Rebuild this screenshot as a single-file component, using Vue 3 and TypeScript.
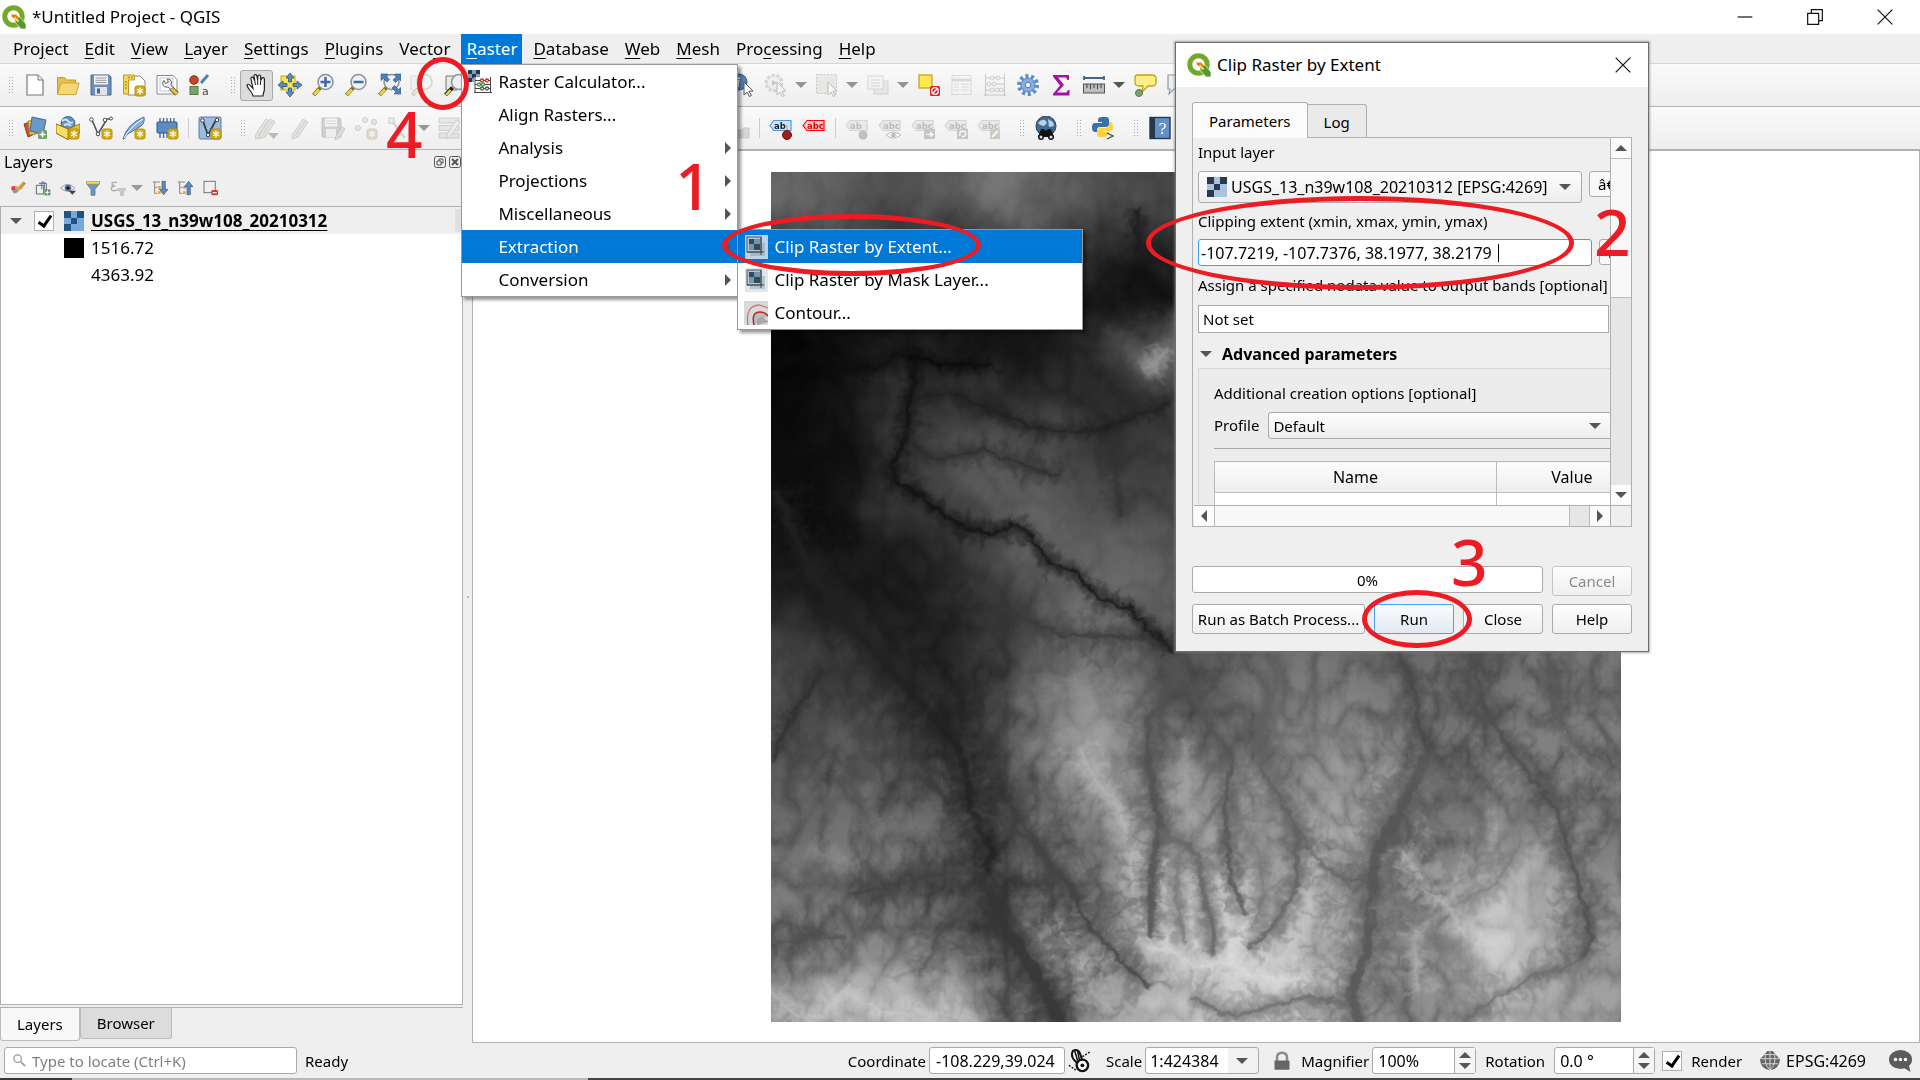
<script setup lang="ts">
import { ref } from 'vue'

interface Tool {
  kind: 'icon' | 'handle' | 'sep' | 'arrow' | 'rest'
  icon?: string
  label?: string
  off?: boolean
  active?: boolean
}

const badge = '<rect x="13" y="13" width="10" height="10" rx="2" fill="#d4aa14" stroke="#b8910c"/><path d="M18 14.500v7M15 16.200l6 3.600M21 16.200l-6 3.600" stroke="#fff" stroke-width="1.300"/>'
const lens = '<path d="M9.500 14.500l-7 7.500" stroke="#7a6a20" stroke-width="4"/><path d="M8 16.500l-5 5" stroke="#f3d23a" stroke-width="2.600"/><circle cx="14.500" cy="9" r="7.500" fill="#eef2f6" stroke="#8b9196" stroke-width="1.500"/>'
const checker = (a: string, b: string) =>
  `<rect x="2" y="2" width="20" height="20" fill="${b}"/><path d="M2 2h7v7H2zM15 2h7v7h-7zM9 9h6v6H9zM2 15h7v7H2z" fill="${a}"/>`
const cursor = '<path d="M13 9l9 9-4 .300 2.400 4.200-2 1-2.300-4.300-3.100 2.800z" fill="#fff" stroke="#555"/>'
const tag = (text: string, fill: string, edge: string, ink: string) =>
  `<path d="M1 9.500l4-5h17v10H5z" fill="${fill}" stroke="${edge}" stroke-width="1.200"/><text x="5" y="13" font-family="DejaVu Sans" font-weight="bold" font-size="8.500" fill="${ink}">${text}</text>`
const clip = '<rect x="1" y="0" width="23" height="24" fill="#b9d3e8"/><path d="M6 8h15v13H6z" fill="#8ba3b5" opacity=".5"/><rect x="3" y="2" width="14" height="15" fill="#b4c6d3" stroke="#555"/><path d="M5 4h5v5H5zM10 9h6v6h-6z" fill="#2d4a5e"/><path d="M10 4h6v5h-6zM5 9h5v6H5z" fill="#7795aa"/><path d="M17 2v18M3 17h17" stroke="#444"/>'
const pencil = '<path d="M5 18L15 3l5 3L10 21l-6 2z" fill="#d9c79a" stroke="#8c8265"/><path d="M7.500 19.500L17.500 4.500" stroke="#8c8265"/>'

const art: Record<string, string> = {
  logo: '<circle cx="11.500" cy="11.500" r="8.700" fill="none" stroke="#74a82a" stroke-width="5"/><path d="M13 12h5l6 7v5h-5l-6-7z" fill="#589632" stroke="#fff" stroke-width=".700"/><path d="M9.500 9.500h4.500l2.500 2.500v2l-2.500.500-4.500-3z" fill="#ee7913"/><path d="M12.500 12.500l4 4" stroke="#f0e64a" stroke-width="2"/>',
  new: '<path d="M4 2h11l5 5v15H4z" fill="#fff" stroke="#777" stroke-width="1.200"/><path d="M15 2v5h5" fill="#eee" stroke="#777"/>',
  open: '<path d="M1.500 21V4.500h7l2 2.500h9v3" fill="#e9bd4e" stroke="#c79a30"/><path d="M1.500 21.500L5 10h18l-3 11.500z" fill="#f7d774" stroke="#d2a53a"/>',
  save: '<path d="M2 2h18l2 2v18H2z" fill="#6d8fb8" stroke="#46678f"/><rect x="5" y="2.500" width="14" height="9" fill="#f4f4f4"/><path d="M6.500 5h11M6.500 7.300h11M6.500 9.500h11" stroke="#999"/><rect x="6" y="14" width="12" height="8" fill="#dfe4ea"/><rect x="8" y="15.500" width="3" height="5" fill="#46678f"/>',
  layout: '<path d="M6 3h12l5 5v14H6z" fill="#fff" stroke="#888"/><path d="M1.500 2h11v5h-6v14h-5z" fill="#f5d65b" stroke="#c09a20"/><path d="M3 9h2M3 12h2M3 15h2M7 3.500v2M10 3.500v2" stroke="#8c7010"/>' + badge,
  manager: '<path d="M2 2.500h16l4 4V21H2z" fill="#fff" stroke="#888"/><rect x="5" y="5" width="13" height="13" fill="none" stroke="#bcc8dd"/><path d="M16 15l6 6" stroke="#7a6420" stroke-width="5"/><path d="M16 15l6 6" stroke="#e6c14a" stroke-width="3"/><path d="M9 7.500l1.500 3 3-1.500-1.500-3q4-.500 4.500 3l-.500 3 2 2.500-2 2-3-2.500q-5 1-5.500-4z" fill="#eee" stroke="#666"/>',
  style: '<circle cx="6" cy="7" r="4.300" fill="#c2482c" stroke="#8d2f1a"/><path d="M13 10l7-8" stroke="#5480b5" stroke-width="3"/><rect x="2" y="13.500" width="8" height="8" fill="#7aa568" stroke="#547c44"/><text x="14" y="22" font-family="DejaVu Sans" font-size="11" fill="#444">a</text>',
  hand: '<path d="M8 23c0-3-5-7-6-10.500 0-1.500 2-2 3.500.500L8 15.500 6 6c-.400-2 2-2.600 2.600-.800L9.800 8 9 3.500c-.300-2.200 2.400-2.600 2.900-.500L12.600 7l.3-3.600c.2-2 2.800-1.800 2.800.200V7.500l1-2c.8-1.700 2.900-1 2.700.900V16c0 3-1.400 4-1.400 7z" fill="#fff" stroke="#222" stroke-width="1.200"/><path d="M9.800 8l.7 4M12.700 7v5M15.700 7.500L15.400 12" stroke="#222"/>',
  panSel: '<rect x="3" y="3" width="14" height="14" fill="#fae64a" stroke="#c6a81a"/><path d="M12 0l4 5h-2.500v4h-3V5H8zM12 24l4-5h-2.500v-4h-3v4H8zM0 12l5-4v2.500h4v3H5V16zM24 12l-5-4v2.500h-4v3h4V16z" fill="#5b8cc4" stroke="#2d5788" stroke-width=".800"/>',
  zoomIn: lens + '<path d="M14.500 4v10M9.500 9h10" stroke="#3f6ea6" stroke-width="2.500"/>',
  zoomOut: lens + '<path d="M9.500 9h10" stroke="#3f6ea6" stroke-width="2.500"/>',
  zoomFull: lens + '<path d="M4 1h7L9 3l3.500 3.500-2.500 2.500-3.500-3.500-2.500 2zM24 1v7l-2-2-3.500 3.500L16 7l3.500-3.500L17.500 1zM24 21h-7l2-2-4-4 2.500-2.500 4 4 2.500-2z" fill="#4d7fb9" stroke="#2d5788" stroke-width=".600"/>',
  zoomSel: '<rect x="1" y="3" width="14" height="14" fill="#efe9b0" stroke="#aaa"/>' + lens,
  zoomLayer: '<path d="M3 3h11v14H3z" fill="#e8e8e8" stroke="#777"/><path d="M9.500 14.500l-7 7.500" stroke="#222" stroke-width="4"/><path d="M7.500 17l-4.500 5" stroke="#f3d23a" stroke-width="2.400"/><circle cx="16" cy="9" r="7.500" fill="#eceef0" stroke="#8b9196" stroke-width="1.500"/>',
  identify: '<circle cx="8" cy="9" r="8" fill="#5580b4" stroke="#345c8c"/><text x="5" y="14" font-family="Liberation Serif" font-style="italic" font-weight="bold" font-size="15" fill="#fff">i</text>' + cursor,
  action: '<circle cx="10" cy="10" r="8" fill="none" stroke="#9a9a9a" stroke-width="3" stroke-dasharray="3 2"/><circle cx="10" cy="10" r="7" fill="#e4e4e4" stroke="#999"/><path d="M8 7l5 3-5 3z" fill="#777"/>' + cursor,
  select: '<rect x="1.500" y="1.500" width="20" height="19" fill="#d5d1b4" stroke="#777" stroke-dasharray="2 1.500"/>' + cursor,
  selectForm: '<rect x="8" y="8" width="14" height="13" fill="#d8d3a5" stroke="#999"/><rect x="2" y="3" width="15" height="13" fill="#f4f4f4" stroke="#999"/><path d="M5 7h9M5 10h9M5 13h9" stroke="#999"/>',
  deselect: '<rect x="2" y="2" width="13" height="13" fill="#fbe94f" stroke="#c6a81a" stroke-width="1.300"/><rect x="13" y="13" width="10" height="10" rx="1.500" fill="#d8232a"/><circle cx="18" cy="18" r="3.300" fill="none" stroke="#fff" stroke-width="1.300"/><path d="M15.800 20.200l4.400-4.400" stroke="#fff" stroke-width="1.300"/>',
  table: '<rect x="2" y="2.500" width="19" height="19" fill="#f2f6fa" stroke="#9ab"/><path d="M2 7h19" stroke="#9ab" stroke-width="3"/><path d="M4 11h5M4 14h5M4 17h5M11 11h8M11 14h8M11 17h8" stroke="#9ab"/>',
  abacus: '<path d="M2.500 1v22M21.500 1v22M1 22h22M2 5h20M2 11h20M2 17h20" stroke="#777" fill="none"/><g fill="#f3e3e3" stroke="#888"><circle cx="9" cy="5" r="2"/><circle cx="15" cy="5" r="2"/><circle cx="6" cy="11" r="2"/><circle cx="11" cy="11" r="2"/><circle cx="9" cy="17" r="2"/><circle cx="14" cy="17" r="2"/><circle cx="18" cy="17" r="2"/></g>',
  gear: '<circle cx="12" cy="12" r="9" fill="none" stroke="#5b8cc8" stroke-width="4" stroke-dasharray="3 2.650"/><circle cx="12" cy="12" r="7" fill="#86aee0" stroke="#4f80be"/><circle cx="12" cy="12" r="2.700" fill="#f5f5f5" stroke="#4f80be"/>',
  sigma: '<path d="M4 2h16v5h-1.500L17 4.500H9L15 12l-7 7.500h9.500L19 17h1.500v5.500H4V21l7-8.500L4 3.500z" fill="#a312a3"/>',
  ruler: '<path d="M2 5h20M2 3v4M22 3v4" stroke="#3f6588" stroke-width="1.800"/><rect x="1.500" y="11" width="21" height="9" fill="#bdbdbd" stroke="#555"/><path d="M5 11v4M8.500 11v5M12 11v4M15.500 11v5M19 11v4" stroke="#444"/>',
  tip: '<path d="M4 2h15q4 0 4 3.500v4q0 3.500-4 3.500h-4l-6 6 1-6H6q-4 0-4-3.500v-4Q2 2 4 2z" fill="#fdef86" stroke="#c6a01a" stroke-width="1.300"/><circle cx="6" cy="20" r="3.500" fill="#7aa568" stroke="#547c44"/>',
  note: '<path d="M2 2h18v14H8l-5 5 1-5H2z" fill="#e9f1f6" stroke="#8d9aa5" stroke-width="1.200"/>',
  dataSource: '<path d="M1 8l9-3 4 12-9 4z" fill="#c2592c" stroke="#8d3f1a"/><path d="M5 5l10-1 1 13-9 2z" fill="#f0c04a" stroke="#b88c20"/><path d="M9 1l14 3-3 14-13-3z" fill="#6b97c9" stroke="#3f6a9c"/><rect x="15" y="14" width="9" height="9" rx="1.500" fill="#6fa26a"/><path d="M19.500 15.500v6M16.500 18.500h6" stroke="#fff" stroke-width="1.600"/>',
  geopackage: '<circle cx="12" cy="7.500" r="7" fill="#5f8fc4" stroke="#3a6799"/><path d="M6 5q4-3 6 0t5 1M8 9q4-2 7 1" stroke="#d7e6f5" stroke-width="2" fill="none"/><path d="M0 8l12 5 12-5v9l-12 6.500L0 17z" fill="#e9c53c" stroke="#967710"/><path d="M12 13v10.500L0 17V8z" fill="#f7df6a" stroke="#967710"/>' + badge,
  shape: '<path d="M3 4l6 14L18 3h4" fill="none" stroke="#46515c" stroke-width="1.500"/><g fill="#fff" stroke="#46515c"><circle cx="2.500" cy="3.500" r="1.800"/><circle cx="9" cy="18" r="1.800"/><circle cx="16" cy="4" r="1.800"/><circle cx="22" cy="2.500" r="1.500"/></g>' + badge,
  feather: '<path d="M1 23Q5 8 22 1q1 6-3 9t-12 7q-3 2-5 6z" fill="#86aed8" stroke="#466d96"/><path d="M2 22Q9 10 21 3" stroke="#fff" fill="none"/>' + badge,
  memory: '<path d="M5 2v20M8.500 2v20M12 2v20M15.500 2v20M19 2v20" stroke="#3f6588" stroke-width="1.300"/><rect x="2" y="6" width="20" height="11" rx="1" fill="#5b8cc4" stroke="#2d5788"/>' + badge,
  virtual: '<rect x="1" y="1" width="22" height="22" rx="1.500" fill="#9dbbdc" stroke="#5a7ba3"/><path d="M5 5l5 14 8-15" fill="none" stroke="#34404c" stroke-width="1.800"/><g fill="#fff" stroke="#34404c"><circle cx="4.500" cy="4.500" r="1.800"/><circle cx="10" cy="19" r="1.800"/><circle cx="19" cy="4" r="1.800"/></g>' + badge,
  pencils: '<g transform="translate(-4 0)">' + pencil + '</g>' + pencil + '<path d="M13 17h11l-5.500 6z" fill="#555"/>',
  pencil,
  saveEdit: '<path d="M1 2h18l1 2v17H1z" fill="#8c8c8c" stroke="#666"/><rect x="4" y="2.500" width="12" height="8" fill="#f4f4f4"/><path d="M5 5h10M5 7.500h10" stroke="#999"/><rect x="5" y="13" width="10" height="8" fill="#e6e6e6"/><path d="M15 20l6-9 3 2-6 9-4 2z" fill="#d9b0a0" stroke="#8c7265"/>',
  points: '<g fill="#cfcfcf" stroke="#777"><circle cx="4" cy="12" r="2.500"/><circle cx="11" cy="4" r="2.500"/><circle cx="20" cy="6" r="2.500"/></g>' + badge,
  node: '<path d="M4 4l14 18M4 22L18 4" stroke="#888" stroke-width="2"/><rect x="2" y="2" width="5" height="5" fill="#ddd" stroke="#777"/>',
  multi: '<path d="M1 2h20v5H1zM1 9.500h20v5H1zM1 17h20v5H1z" fill="#cfcba5" stroke="#888"/><path d="M9 18l9-14 4 2-9 14-4 3z" fill="#ddd" stroke="#888"/>',
  diagram: '<path d="M4 22V2h5v20zM11 22v-8h5v8z" fill="#a88" stroke="#777"/><path d="M17 22V12h6v10z" fill="#9a9" stroke="#777"/>',
  label: tag('ab', '#cfe4fb', '#4d97e8', '#222') + '<path d="M18 17V9" stroke="#fff" stroke-width="2.500"/><path d="M18 17V9" stroke="#777"/><circle cx="18" cy="19" r="4.500" fill="#a51d1d" stroke="#701010"/>',
  abc: tag('abc', '#ffc9c9', '#f00', '#e00'),
  label2: tag('ab', '#d8d4b8', '#999', '#555') + '<circle cx="18" cy="19" r="4.500" fill="#a05050"/>',
  labelEye: tag('abc', '#d8d4b8', '#999', '#555') + '<path d="M8 19q7-6 15 0-8 6-15 0z" fill="#fff" stroke="#555"/><circle cx="15.500" cy="19" r="2.300" fill="#555"/>',
  labelMove: tag('abc', '#d8d4b8', '#999', '#555') + '<rect x="13" y="13" width="11" height="10" fill="#777"/><path d="M15 18h4v-3l4 3.500-4 3V19h-4z" fill="#fff"/>',
  labelRot: tag('abc', '#d8d4b8', '#999', '#555') + '<rect x="13" y="13" width="11" height="10" fill="#777"/><path d="M16 20q-1-5 3-5t2 5l-3 1" fill="none" stroke="#fff" stroke-width="1.500"/>',
  labelEdit: tag('abc', '#d8d4b8', '#999', '#555') + '<rect x="13" y="13" width="10" height="10" fill="#8c8840"/><path d="M15 21l6-6" stroke="#fff" stroke-width="2"/>',
  metasearch: '<circle cx="12" cy="10" r="10" fill="#44698f" stroke="#2c4560"/><path d="M4 7q3-4 7-3l2 3-3 3-4-1zM14 3l5 3 1 4-5 1z" fill="#b9d0e6"/><path d="M4 21l3-8h3l2 2 2-2h3l3 8z" fill="#111"/><circle cx="7" cy="21" r="3" fill="#111"/><circle cx="17" cy="21" r="3" fill="#111"/><circle cx="7" cy="21" r="1.500" fill="#ddd"/><circle cx="17" cy="21" r="1.500" fill="#ddd"/>',
  python: '<path d="M11 1h4q3 0 3 3v4q0 3-3 3H9q-3 0-3 3v2H4q-3 0-3-4.500T4 7h7V6H7V4q0-3 4-3z" fill="#3873a8"/><path d="M13 21H9q-3 0-3-3v-3q0-3 3-3h6q3 0 3-3V6h1q3 0 3 4.500T19 15h-7v1h5v2q0 3-4 3z" fill="#fdd142"/><path d="M16 17l6 3-6 3" fill="none" stroke="#444" stroke-width="1.300"/>',
  help: '<rect x="2" y="1.500" width="20" height="21" fill="#6290c8" stroke="#26384c" stroke-width="1.400"/><rect x="2" y="1.500" width="5" height="21" fill="#26384c"/><text x="10.500" y="18" font-family="DejaVu Serif" font-size="15" fill="#fff">?</text>',
  calc: '<rect x="0" y="0" width="12" height="12" fill="#7e9fb8"/><path d="M0 0h4v4H0zM8 0h4v4H8zM4 4h4v4H4zM0 8h4v4H0z" fill="#1f3a52"/><rect x="6" y="7" width="17" height="16" fill="#fff"/><path d="M7 7v16M22.500 7v16M6 22.500h18M7 10.500h16M7 14.500h16M7 18.500h16" stroke="#444"/><g fill="#fff" stroke-width="1.300"><g stroke="#d22"><circle cx="14" cy="10.500" r="1.500"/><circle cx="19" cy="10.500" r="1.500"/></g><g stroke="#393"><circle cx="11" cy="14.500" r="1.500"/><circle cx="15" cy="14.500" r="1.500"/></g><g stroke="#555"><circle cx="14" cy="18.500" r="1.500"/><circle cx="19" cy="18.500" r="1.500"/></g></g>',
  clip,
  mask: clip.replace('#b9d3e8', '#dfe7ee'),
  contour: '<rect width="24" height="24" fill="#d9d9d9"/><path d="M4 24Q1 5 15 4l9 3" fill="none" stroke="#c77" stroke-width="1.300"/><path d="M10 24Q7 11 16 11q5 0 8 4" fill="#bbb" stroke="#b22" stroke-width="1.500"/><path d="M14 24q-1-8 4-7l6 4" fill="#aaa" stroke="#999"/>',
  rasterBlue: checker('#23527c', '#74a9dc'),
  raster: checker('#283a50', '#a9c3e0'),
  brush: '<path d="M13 11l7-8 3 2-7 9z" fill="#d99a3a" stroke="#a06a1a"/><path d="M2 12q5-5 10-2l3 4q-3 7-10 6z" fill="#e3a33c"/><path d="M2 10l5-1 1 5-5 2z" fill="#d33"/><path d="M7 14l5 1-3 5-5-2z" fill="#57a5d8"/>',
  group: '<path d="M2 8h11v13H2zM6 5h11v13" fill="none" stroke="#666" stroke-width="1.500"/><path d="M10 14V3h4v12" fill="none" stroke="#5580a4" stroke-width="1.500"/><rect x="14" y="14" width="9" height="9" fill="#5f9d5a"/><path d="M18.500 15.500v6M15.500 18.500h6" stroke="#fff" stroke-width="1.500"/>',
  eye: '<path d="M1 12q10-11 21 0-10 10-21 0z" fill="#f2f2f2" stroke="#777"/><circle cx="12" cy="12" r="5" fill="#5078a0"/><circle cx="12" cy="12" r="2.400" fill="#111"/><path d="M13 16h11l-5.500 6z" fill="#444"/>',
  filter: '<path d="M2 5h20l-7 9v9h-6v-9z" fill="#6f97bd" stroke="#49708f"/><rect x="2" y="2" width="20" height="4" fill="#f2df52" stroke="#b39d20"/>',
  expr: '<path d="M10 4Q3 2 3 6q0 3 5 3-6 0-6 4 0 5 9 2" fill="none" stroke="#aaa" stroke-width="2"/><path d="M12 13h11v2l-3 3v5h-4v-5l-4-3z" fill="#ccc" stroke="#aaa"/>',
  expand: '<path d="M1 3h11M4 3v17h4M4 11h4" stroke="#888" fill="none" stroke-width="1.500"/><path d="M9 9h4v4H9zM9 17h4v4H9z" fill="#f4a32c"/><path d="M15 2h5v12h4l-6.500 8L11 14h4z" fill="#5d8cbc" stroke="#2d5788"/>',
  collapse: '<path d="M1 3h11M4 3v17h4M4 11h4" stroke="#888" fill="none" stroke-width="1.500"/><path d="M9 9h4v4H9zM9 17h4v4H9z" fill="#f4a32c"/><path d="M15 22h5V10h4l-6.500-8L11 10h4z" fill="#5d8cbc" stroke="#2d5788"/>',
  remove: '<rect x="3" y="2" width="17" height="17" fill="none" stroke="#777" stroke-width="1.500"/><rect x="14" y="15" width="10" height="8" rx="2" fill="#d8353a"/><path d="M16 19h6" stroke="#fff" stroke-width="2"/>',
  track: '<path d="M5 2q6-3 8 4l2 6-6 2Q2 8 5 2z" fill="#fff" stroke="#111" stroke-width="2.200"/><path d="M7 2l3 10M10 2l2 10" stroke="#111" stroke-width="1.600"/><circle cx="15" cy="17" r="6" fill="#fff" stroke="#111" stroke-width="2.400"/><circle cx="15" cy="17" r="2" fill="#111"/><path d="M15 8l8-5M1 17l7 5" stroke="#111" stroke-width="1.500" stroke-dasharray="2 1.500"/>',
  lock: '<path d="M6 12V8q0-6 6-6t6 6v4" fill="none" stroke="#8b8b8b" stroke-width="3"/><rect x="3" y="11.500" width="18" height="11" rx="1" fill="#666"/>',
  globe: '<path d="M6 5l3-4h6l3 4 5 5q-1 11-11 12Q2 21 1 10z" fill="#666"/><path d="M1 9.500h22M3 15h18M12 1v21M7 5q-2 10 5 17M17 5q2 10-5 17M6 5h12" stroke="#ddd" fill="none"/>',
  bubble: '<ellipse cx="12" cy="10.500" rx="11.500" ry="9.500" fill="#5c5c5c"/><path d="M14 18l8 5-2-8z" fill="#5c5c5c"/><g fill="#fff"><circle cx="7" cy="10.500" r="1.700"/><circle cx="12" cy="10.500" r="1.700"/><circle cx="17" cy="10.500" r="1.700"/></g>',
  search: '<circle cx="9" cy="9" r="6" fill="none" stroke="#999" stroke-width="2"/><path d="M14 14l7 7" stroke="#999" stroke-width="2.500"/>',
  close: '<path d="M4 4l16 16M20 4L4 20" stroke="#111" stroke-width="1.300"/>',
  min: '<path d="M4 12h16" stroke="#111" stroke-width="1.300"/>',
  restore: '<path d="M4 8h12v12H4zM8 8V4h12v12h-4" fill="none" stroke="#111" stroke-width="1.300"/>',
}

const i = (icon: string, label: string, extra: Partial<Tool> = {}): Tool => ({ kind: 'icon', icon, label, ...extra })
const off = { off: true }
const handle: Tool = { kind: 'handle' }
const sep: Tool = { kind: 'sep' }
const arrow: Tool = { kind: 'arrow' }
const arrowOff: Tool = { kind: 'arrow', off: true }
const rest: Tool = { kind: 'rest' }

const toolbars: Tool[][] = [
  [
    handle, i('new', 'New project'), i('open', 'Open project'), i('save', 'Save project'), i('layout', 'New print layout'),
    i('manager', 'Layout manager'), i('style', 'Style manager'), handle, i('hand', 'Pan map', { active: true }),
    i('panSel', 'Pan to selection'), i('zoomIn', 'Zoom in'), i('zoomOut', 'Zoom out'), i('zoomFull', 'Zoom full'),
    i('zoomSel', 'Zoom to selection', off), i('zoomLayer', 'Zoom to layer'), rest, i('identify', 'Identify'),
    i('action', 'Run action', off), arrowOff, i('select', 'Select features', off), arrowOff,
    i('selectForm', 'Select by value', off), arrowOff, i('deselect', 'Deselect'), i('table', 'Attribute table', off),
    i('abacus', 'Field calculator', off), i('gear', 'Processing toolbox'), i('sigma', 'Statistics'),
    i('ruler', 'Measure'), arrow, i('tip', 'Map tips'), i('note', 'Annotation'),
  ],
  [
    handle, i('dataSource', 'Data source manager'), i('geopackage', 'New GeoPackage'), i('shape', 'New shapefile'),
    i('feather', 'New SpatiaLite'), i('memory', 'New scratch layer'), sep, i('virtual', 'New virtual layer'), handle,
    i('pencils', 'Current edits', off), i('pencil', 'Toggle editing', off), i('saveEdit', 'Save edits', off),
    i('points', 'Add point', off), i('node', 'Vertex tool', off), arrowOff, i('multi', 'Modify attributes', off), rest,
    i('diagram', 'Diagram', off), sep, i('label', 'Label toolbar'), i('abc', 'Unplaced labels'), sep,
    i('label2', 'Pin labels', off), i('labelEye', 'Show labels', off), i('labelMove', 'Move label', off),
    i('labelRot', 'Rotate label', off), i('labelEdit', 'Change label', off), handle, i('metasearch', 'MetaSearch'),
    handle, i('python', 'Python console'), handle, i('help', 'Help contents'),
  ],
]

const menus = [
  ['Pro', 'j', 'ect'], ['', 'E', 'dit'], ['', 'V', 'iew'], ['', 'L', 'ayer'], ['', 'S', 'ettings'], ['', 'P', 'lugins'],
  ['Vect', 'o', 'r'], ['', 'R', 'aster'], ['', 'D', 'atabase'], ['', 'W', 'eb'], ['', 'M', 'esh'], ['Pro', 'c', 'essing'], ['', 'H', 'elp'],
]
const rasterMenu = [
  { label: 'Raster Calculator...', icon: 'calc' }, { label: 'Align Rasters...' }, { label: 'Analysis', sub: true },
  { label: 'Projections', sub: true }, { label: 'Miscellaneous', sub: true }, { label: 'Extraction', sub: true, open: true },
  { label: 'Conversion', sub: true },
] as { label: string; icon?: string; sub?: boolean; open?: boolean }[]
const extractionMenu = [
  { label: 'Clip Raster by Extent...', icon: 'clip', active: true },
  { label: 'Clip Raster by Mask Layer...', icon: 'mask', active: false },
  { label: 'Contour...', icon: 'contour', active: false },
]
const dockTools = ['brush', 'group', 'eye', 'filter', 'expr', '', 'expand', 'collapse', 'remove']

const extent = ref('-107.7219, -107.7376, 38.1977, 38.2179')
const nodata = ref('Not set')
const coordinate = ref('-108.229,39.024')
const magnifier = ref('100%')
const rotation = ref('0.0 °')
const rendering = ref(true)
const visible = ref(true)

/* Coarse elevation samples, 17 by 17, smoothed by the blur filter. */
const samples = [
  [100, 85, 70, 85, 115, 95, 80, 70, 60, 60, 60, 60, 60, 60, 60, 60, 60],
  [60, 65, 50, 45, 60, 60, 45, 36, 40, 50, 50, 50, 50, 50, 50, 50, 50],
  [8, 10, 12, 15, 26, 32, 16, 8, 20, 50, 50, 50, 50, 50, 50, 50, 50],
  [4, 16, 24, 22, 16, 20, 42, 96, 110, 50, 50, 50, 50, 50, 50, 50, 50],
  [8, 18, 46, 50, 44, 38, 34, 44, 60, 50, 50, 50, 50, 50, 50, 50, 50],
  [12, 14, 46, 72, 78, 70, 52, 50, 60, 60, 60, 60, 60, 60, 60, 60, 60],
  [12, 16, 48, 70, 88, 92, 72, 60, 60, 60, 60, 60, 60, 60, 60, 60, 60],
  [14, 16, 26, 42, 66, 96, 92, 88, 80, 60, 60, 60, 60, 60, 60, 60, 60],
  [34, 26, 22, 30, 56, 84, 106, 98, 80, 70, 70, 70, 70, 70, 70, 70, 70],
  [58, 46, 32, 26, 50, 84, 104, 84, 70, 92, 95, 92, 90, 85, 90, 95, 92],
  [72, 58, 44, 30, 50, 106, 134, 92, 62, 98, 112, 108, 92, 92, 88, 100, 98],
  [72, 78, 68, 40, 60, 116, 156, 98, 100, 84, 116, 124, 108, 82, 96, 104, 96],
  [84, 88, 88, 68, 50, 90, 142, 126, 128, 130, 122, 138, 128, 88, 112, 96, 100],
  [92, 100, 102, 88, 54, 84, 110, 146, 140, 142, 130, 158, 100, 96, 144, 132, 100],
  [102, 96, 72, 60, 54, 70, 100, 136, 156, 158, 152, 140, 118, 110, 178, 166, 118],
  [90, 102, 108, 98, 56, 110, 126, 148, 164, 186, 166, 158, 128, 124, 206, 164, 128],
  [138, 164, 172, 156, 92, 80, 136, 170, 178, 192, 184, 160, 104, 124, 176, 154, 138],
]
const cells = samples.flatMap((row, r) =>
  row.map((v, c) => {
    const edgeX = c === 0 ? 120 : 0
    const edgeY = r === 0 ? 120 : 0
    return { x: 20 + c * 90 - edgeX, y: 22 + r * 90 - edgeY, w: 92 + edgeX + (c === 16 ? 120 : 0), h: 92 + edgeY + (r === 16 ? 120 : 0), fill: `rgb(${v},${v},${v})` }
  }),
)

type Line = { p: number[]; w: number; c: number; len: number; o?: number }
const valleys: Line[] = [
  { p: [20, 368, 110, 350, 140, 378, 210, 375, 245, 350, 275, 352, 280, 400, 265, 440, 268, 470, 255, 520, 240, 545, 240, 580, 290, 605, 330, 640, 365, 660, 420, 675, 455, 655, 490, 680, 520, 725, 570, 745, 610, 790, 660, 805, 700, 845, 745, 885], w: 6, c: 14, len: 22 },
  { p: [280, 430, 340, 420, 400, 445, 450, 465, 505, 487, 620, 487, 650, 470, 740, 440], w: 5, c: 30, len: 16 },
  { p: [265, 490, 300, 535, 330, 540, 400, 520, 440, 540, 540, 570], w: 5, c: 42, len: 22 },
  { p: [275, 352, 330, 370, 420, 372], w: 4, c: 6, len: 12 },
  { p: [640, 490, 640, 560, 650, 640], w: 6, c: 50, len: 24 },
  { p: [30, 600, 90, 740, 200, 880, 300, 990, 360, 1060, 385, 1180, 420, 1250, 400, 1300], w: 14, c: 34, len: 50 },
  { p: [400, 1290, 400, 1340, 460, 1410, 510, 1490, 545, 1560], w: 22, c: 54, len: 90 },
  { p: [400, 1280, 300, 1290, 165, 1325], w: 7, c: 66, len: 50 },
  { p: [380, 760, 440, 810, 540, 855, 700, 862, 740, 890], w: 7, c: 58, len: 40 },
  { p: [385, 1170, 480, 1220, 560, 1310, 590, 1380, 650, 1440, 700, 1490], w: 8, c: 66, len: 70 },
  { p: [740, 890, 740, 960, 700, 1010, 700, 1090, 720, 1200, 705, 1290, 705, 1400], w: 12, c: 80, len: 40 },
  { p: [720, 1210, 790, 1250, 800, 1330, 820, 1400, 815, 1430], w: 10, c: 100, len: 26 },
  { p: [745, 900, 800, 1000, 850, 1080, 838, 1180, 850, 1300, 875, 1360], w: 9, c: 84, len: 34 },
  { p: [925, 890, 930, 940, 900, 1020, 905, 1100, 965, 1200, 970, 1300, 930, 1380, 880, 1420], w: 8, c: 96, len: 34 },
  { p: [755, 1260, 750, 1330, 765, 1410], w: 7, c: 120, len: 18 },
  { p: [850, 1180, 900, 1250, 910, 1330, 890, 1380], w: 6, c: 120, len: 22 },
  { p: [965, 1200, 1010, 1270, 1050, 1295, 1100, 1300], w: 5, c: 96, len: 36 },
  { p: [1150, 890, 1180, 950, 1185, 1010, 1205, 1070], w: 6, c: 70, len: 24 },
  { p: [1205, 1070, 1150, 1180, 1110, 1250, 1100, 1350, 1095, 1430, 1065, 1500, 1080, 1560], w: 18, c: 84, len: 84 },
  { p: [1280, 890, 1310, 1000, 1380, 1100, 1440, 1180, 1480, 1330, 1500, 1400, 1480, 1440], w: 8, c: 76, len: 44 },
  { p: [1065, 1520, 980, 1510, 900, 1530, 850, 1545, 780, 1510], w: 8, c: 104, len: 40 },
  { p: [110, 920, 60, 1000, 20, 1080], w: 5, c: 44, len: 14 },
  { p: [215, 1180, 240, 1130, 310, 980], w: 2, c: 56, len: 6 },
  { p: [120, 1120, 140, 1060], w: 2, c: 56, len: 6 },
  { p: [20, 1415, 90, 1398, 150, 1400], w: 5, c: 76, len: 34 },
  { p: [400, 1320, 330, 1380, 290, 1470], w: 5, c: 80, len: 40 },
  { p: [1480, 1440, 1380, 1480, 1310, 1520, 1270, 1554], w: 6, c: 104, len: 44 },
  { p: [1200, 1090, 1240, 1150, 1300, 1180, 1290, 1260], w: 4, c: 104, len: 34 },
  { p: [1380, 1130, 1370, 1230, 1330, 1300, 1260, 1340], w: 5, c: 120, len: 30 },
  { p: [1100, 1350, 1180, 1345, 1240, 1410, 1270, 1450], w: 4, c: 130, len: 26 },
  { p: [1420, 890, 1430, 1000, 1480, 1060, 1552, 1100], w: 4, c: 84, len: 26 },
  { p: [680, 90, 680, 160, 740, 190], w: 5, c: 26, len: 24 },
]
const ridges: Line[] = [
  { p: [575, 1060, 600, 1110, 650, 1170, 668, 1250, 672, 1340, 690, 1400, 725, 1435], w: 5, c: 205, len: 34, o: 0.4 },
  { p: [765, 1050, 770, 1120, 772, 1190], w: 6, c: 175, len: 16, o: 0.35 },
  { p: [735, 1260, 728, 1340, 732, 1420], w: 3, c: 220, len: 20, o: 0.5 },
  { p: [778, 1280, 775, 1350, 785, 1430], w: 3, c: 220, len: 18, o: 0.5 },
  { p: [825, 1280, 840, 1370, 848, 1440], w: 4, c: 228, len: 24, o: 0.5 },
  { p: [880, 1300, 875, 1390, 850, 1440], w: 4, c: 225, len: 22, o: 0.45 },
  { p: [1000, 1240, 990, 1320, 985, 1380, 940, 1440, 850, 1450], w: 4, c: 210, len: 34, o: 0.4 },
  { p: [700, 1420, 740, 1425, 780, 1455, 840, 1445, 900, 1475, 1000, 1480], w: 4, c: 232, len: 44, o: 0.45 },
  { p: [20, 1500, 60, 1540, 110, 1545, 150, 1500, 220, 1535, 330, 1540, 400, 1554], w: 5, c: 218, len: 36, o: 0.4 },
  { p: [530, 1360, 570, 1430, 600, 1500, 640, 1540], w: 4, c: 190, len: 56, o: 0.35 },
  { p: [90, 1240, 130, 1260, 180, 1270], w: 6, c: 150, len: 24, o: 0.3 },
  { p: [690, 378, 715, 365, 735, 340], w: 8, c: 185, len: 30, o: 0.45 },
  { p: [1160, 1240, 1200, 1320, 1240, 1345, 1270, 1400], w: 6, c: 215, len: 50, o: 0.3 },
  { p: [1180, 1380, 1185, 1500], w: 5, c: 200, len: 26, o: 0.3 },
  { p: [1230, 1340, 1300, 1290, 1350, 1300], w: 5, c: 195, len: 50, o: 0.3 },
  { p: [1460, 1060, 1500, 1100, 1552, 1140], w: 6, c: 150, len: 40, o: 0.3 },
  { p: [570, 930, 590, 1000, 575, 1060], w: 6, c: 150, len: 60, o: 0.25 },
]

let seed = 7
const rnd = () => {
  seed = (seed * 16807) % 2147483647
  return seed / 2147483647
}
const trunk = (p: number[]) => {
  let d = `M${p[0]} ${p[1]}`
  for (let k = 2; k < p.length; k += 2) d += `L${p[k]} ${p[k + 1]}`
  return d
}
/* Side branches grow off a line at a slant, each carrying a few twigs. */
const branches = (line: Line) => {
  let d = ''
  const { p, len } = line
  for (let k = 0; k + 3 < p.length; k += 2) {
    const dx = p[k + 2] - p[k]
    const dy = p[k + 3] - p[k + 1]
    const dist = Math.hypot(dx, dy)
    const heading = Math.atan2(dy, dx)
    for (let s = 0; s < dist; s += 9) {
      for (const side of [-1, 1]) {
        let x = p[k] + (dx * s) / dist
        let y = p[k + 1] + (dy * s) / dist
        let a = heading + side * (1.2 + rnd() * 0.7)
        const reach = (len + line.w / 2) * (0.3 + rnd() * rnd() * 1.2)
        d += `M${x.toFixed(0)} ${y.toFixed(0)}`
        for (let n = 0; n < 4; n++) {
          a += (rnd() - 0.5) * 0.6
          x += (Math.cos(a) * reach) / 4
          y += (Math.sin(a) * reach) / 4
          d += `L${x.toFixed(0)} ${y.toFixed(0)}`
          if (n > 0) {
            const t = a + (rnd() > 0.5 ? 0.8 : -0.8)
            d += `l${(Math.cos(t) * reach * 0.25).toFixed(0)} ${(Math.sin(t) * reach * 0.25).toFixed(0)}M${x.toFixed(0)} ${y.toFixed(0)}`
          }
        }
      }
    }
  }
  return d
}
const draw = (l: Line) => ({ ...l, d: trunk(l.p), b: branches(l), stroke: `rgb(${l.c},${l.c},${l.c})` })
const valleyPaths = valleys.map(draw)
const ridgePaths = ridges.map(draw)
</script>

<template>
  <div class="app">
    <header class="titlebar">
      <svg class="logo" viewBox="0 0 24 24" v-html="art.logo"></svg>
      <h1>*Untitled Project - QGIS</h1>
      <button v-for="b in ['min', 'restore', 'close']" :key="b" class="win" :aria-label="b">
        <svg viewBox="0 0 24 24" v-html="art[b]"></svg>
      </button>
    </header>

    <nav class="menubar">
      <div v-for="m in menus" :key="m.join('')" class="menu" :class="{ open: m[1] === 'R' }">
        <button>{{ m[0] }}<u>{{ m[1] }}</u>{{ m[2] }}</button>
        <ul v-if="m[1] === 'R'" class="popup">
          <li v-for="r in rasterMenu" :key="r.label" :class="{ active: r.open }">
            <button>
              <svg class="mi" viewBox="0 0 24 24" v-html="r.icon ? art[r.icon] : ''"></svg>
              <span>{{ r.label }}</span>
              <i v-if="r.sub" class="tri right"></i>
            </button>
            <ul v-if="r.open" class="popup sub">
              <li v-for="e in extractionMenu" :key="e.label" :class="{ active: e.active }">
                <button>
                  <svg class="mi" viewBox="0 0 24 24" v-html="art[e.icon]"></svg>
                  <span>{{ e.label }}</span>
                </button>
              </li>
            </ul>
          </li>
        </ul>
      </div>
    </nav>

    <div v-for="(bar, n) in toolbars" :key="n" class="toolbar">
      <template v-for="(t, k) in bar" :key="k">
        <span v-if="t.kind === 'handle'" class="handle" :class="{ first: k === 0 }"></span>
        <span v-else-if="t.kind === 'sep'" class="sep"></span>
        <span v-else-if="t.kind === 'rest'" class="rest"></span>
        <button v-else-if="t.kind === 'arrow'" class="drop" :class="{ off: t.off }" aria-label="More"><i class="tri down"></i></button>
        <button v-else class="tool" :class="{ off: t.off, on: t.active }" :aria-label="t.label">
          <svg viewBox="0 0 24 24" v-html="art[t.icon!]"></svg>
        </button>
      </template>
    </div>

    <main class="work">
      <aside class="dock">
        <div class="dock-title">
          <h2>Layers</h2>
          <button aria-label="Float"><svg viewBox="0 0 12 12"><rect x=".5" y=".5" width="11" height="11" rx="2" /><path d="M3 5h4v4H3zM5 5V3h4v4H7" /></svg></button>
          <button aria-label="Close panel"><svg viewBox="0 0 12 12"><rect x=".5" y=".5" width="11" height="11" rx="2" /><path d="M3 3l6 6M9 3L3 9" stroke-width="2" /></svg></button>
        </div>
        <div class="dock-tools">
          <template v-for="d in dockTools" :key="d">
            <button v-if="d" :aria-label="d"><svg viewBox="0 0 24 24" v-html="art[d]"></svg></button>
            <i v-else class="tri down pale"></i>
          </template>
        </div>
        <div class="tree">
          <div class="node top">
            <i class="tri down"></i>
            <input v-model="visible" type="checkbox" class="check" aria-label="Show layer" />
            <svg class="swatch" viewBox="2 2 20 20" v-html="art.rasterBlue"></svg>
            <strong>USGS_13_n39w108_20210312</strong>
          </div>
          <div class="node"><span class="swatch black"></span>1516.72</div>
          <div class="node"><span class="swatch"></span>4363.92</div>
        </div>
        <div class="dock-tabs"><button class="cur">Layers</button><button>Browser</button></div>
      </aside>
      <div class="splitter"></div>
      <section class="canvas">
        <svg class="dem" viewBox="20 22 1532 1532">
          <defs>
            <filter id="smooth" x="-10%" y="-10%" width="120%" height="120%" color-interpolation-filters="sRGB">
              <feGaussianBlur stdDeviation="32" result="b" />
              <feTurbulence type="fractalNoise" baseFrequency="0.012" numOctaves="5" seed="4" />
              <feDisplacementMap in="b" scale="80" xChannelSelector="R" yChannelSelector="G" />
            </filter>
            <filter id="wide" x="-20%" y="-20%" width="140%" height="140%" color-interpolation-filters="sRGB">
              <feGaussianBlur stdDeviation="9" result="b" />
              <feTurbulence type="fractalNoise" baseFrequency="0.04" numOctaves="4" seed="9" />
              <feDisplacementMap in="b" scale="30" xChannelSelector="R" yChannelSelector="G" />
            </filter>
            <filter id="fine" x="-10%" y="-10%" width="120%" height="120%" color-interpolation-filters="sRGB">
              <feGaussianBlur stdDeviation="2" result="b" />
              <feTurbulence type="fractalNoise" baseFrequency="0.05" numOctaves="3" seed="2" />
              <feDisplacementMap in="b" scale="18" xChannelSelector="R" yChannelSelector="G" />
            </filter>
            <filter id="grain" x="0" y="0" width="100%" height="100%" color-interpolation-filters="sRGB">
              <feTurbulence type="turbulence" baseFrequency="0.018 0.013" numOctaves="6" seed="12" />
              <feColorMatrix values="1.4 0 0 0 0.22  1.4 0 0 0 0.22  1.4 0 0 0 0.22  0 0 0 0 1" />
            </filter>
            <linearGradient id="rough" x1="0.3" y1="0" x2="0.6" y2="1">
              <stop offset="0.45" stop-color="#fff" stop-opacity="0.12" />
              <stop offset="0.75" stop-color="#fff" stop-opacity="0.45" />
            </linearGradient>
            <mask id="south"><rect x="20" y="22" width="1532" height="1532" fill="url(#rough)" /></mask>
          </defs>
          <g filter="url(#smooth)">
            <rect v-for="(c, k) in cells" :key="k" :x="c.x" :y="c.y" :width="c.w" :height="c.h" :fill="c.fill" />
          </g>
          <g class="relief" mask="url(#south)">
            <rect x="20" y="22" width="1532" height="1532" filter="url(#grain)" />
          </g>
          <g filter="url(#wide)" fill="none" stroke-linejoin="round">
            <path v-for="(v, k) in valleyPaths" :key="k" :d="v.d" :stroke="v.stroke" :stroke-width="v.w * 2 + 8" opacity=".5" />
            <path v-for="(v, k) in ridgePaths" :key="'r' + k" :d="v.d" :stroke="v.stroke" :stroke-width="v.w * 3 + 8" :opacity="v.o" />
          </g>
          <g filter="url(#fine)" fill="none" stroke-linejoin="round" stroke-linecap="round">
            <template v-for="(v, k) in ridgePaths" :key="k">
              <path :d="v.b" :stroke="v.stroke" stroke-width="4" opacity=".26" />
              <path :d="v.d" :stroke="v.stroke" stroke-width="4" opacity=".4" />
            </template>
            <template v-for="(v, k) in valleyPaths" :key="'v' + k">
              <path :d="v.b" :stroke="v.stroke" stroke-width="4" opacity=".32" />
              <path :d="v.d" :stroke="v.stroke" :stroke-width="v.w" opacity=".75" />
            </template>
          </g>
        </svg>
      </section>
    </main>

    <footer class="status">
      <label class="locate">
        <svg viewBox="0 0 24 24" v-html="art.search"></svg>
        <input type="text" placeholder="Type to locate (Ctrl+K)" aria-label="Locate" />
      </label>
      <span class="ready">Ready</span>
      <label for="coord">Coordinate</label>
      <input id="coord" v-model="coordinate" class="box coord" type="text" />
      <svg class="track" viewBox="0 0 24 24" v-html="art.track"></svg>
      <label for="scale">Scale</label>
      <span class="combo scale"><select id="scale"><option>1:424384</option></select><i class="tri down"></i></span>
      <svg class="lock" viewBox="0 0 24 24" v-html="art.lock"></svg>
      <label for="mag">Magnifier</label>
      <span class="spin"><input id="mag" v-model="magnifier" type="text" /><span><i class="tri up"></i><i class="tri down"></i></span></span>
      <label for="rot" class="rot">Rotation</label>
      <span class="spin"><input id="rot" v-model="rotation" type="text" /><span><i class="tri up"></i><i class="tri down"></i></span></span>
      <input id="render" v-model="rendering" type="checkbox" class="check" />
      <label for="render" class="render">Render</label>
      <button class="crs"><svg viewBox="0 0 24 24" v-html="art.globe"></svg>EPSG:4269</button>
      <button class="msg" aria-label="Messages"><svg viewBox="0 0 24 24" v-html="art.bubble"></svg></button>
    </footer>
    <div class="taskedge"></div>

    <section class="dialog" role="dialog" aria-label="Clip Raster by Extent">
      <header>
        <svg class="logo" viewBox="0 0 24 24" v-html="art.logo"></svg>
        <h2>Clip Raster by Extent</h2>
        <button aria-label="Close dialog"><svg viewBox="0 0 24 24" v-html="art.close"></svg></button>
      </header>
      <div class="tabs"><button class="cur">Parameters</button><button>Log</button></div>
      <div class="pane">
        <div class="view">
          <form class="form" @submit.prevent>
            <label for="input-layer">Input layer</label>
            <div class="line first">
              <span class="combo layer">
                <svg viewBox="2 2 20 20" v-html="art.raster"></svg>
                <select id="input-layer"><option>USGS_13_n39w108_20210312 [EPSG:4269]</option></select>
                <i class="tri down"></i>
              </span>
              <button class="side" type="button">â€¦</button>
            </div>
            <label for="extent">Clipping extent (xmin, xmax, ymin, ymax)</label>
            <div class="line ext">
              <span class="field"><input id="extent" v-model="extent" type="text" /></span>
              <button class="side" type="button">...</button>
            </div>
            <label for="nodata">Assign a specified nodata value to output bands [optional]</label>
            <input id="nodata" v-model="nodata" class="nodata" type="text" />
            <h3><i class="tri down"></i>Advanced parameters</h3>
            <div class="adv">
              <label for="profile">Additional creation options [optional]</label>
              <div class="line profile">
                <label for="profile">Profile</label>
                <span class="combo"><select id="profile"><option>Default</option></select><i class="tri down"></i></span>
              </div>
              <hr />
              <table>
                <thead><tr><th class="name">Name</th><th>Value</th></tr></thead>
                <tbody><tr><td></td><td></td></tr></tbody>
              </table>
            </div>
          </form>
        </div>
        <div class="vbar"><b><i class="tri up"></i></b><s></s><em></em><b><i class="tri down"></i></b></div>
        <div class="hbar"><b><i class="tri left"></i></b><s></s><em></em><b><i class="tri right"></i></b></div>
        <div class="corner"></div>
      </div>
      <div class="actions">
        <div class="progress" role="progressbar">0%</div>
        <button disabled>Cancel</button>
      </div>
      <div class="actions last">
        <button class="batch">Run as Batch Process...</button>
        <button class="run">Run</button>
        <button>Close</button>
        <button>Help</button>
      </div>
    </section>

    <div class="ring r1"></div>
    <div class="ring r2"></div>
    <div class="ring r3"></div>
    <div class="ring r4"></div>
    <span class="step s1">1</span>
    <span class="step s2">2</span>
    <span class="step s3">3</span>
    <span class="step s4">4</span>
  </div>
</template>

<style>
body {
  margin: 0;
  background: #efefef;
}
</style>

<style scoped>
.app {
  position: relative;
  display: flex;
  flex-direction: column;
  min-height: 100vh;
  overflow: hidden;
  background: #efefef;
  color: #000;
  font: 15px/20px 'Noto Sans', 'Open Sans', sans-serif;
}
.app * { box-sizing: border-box; }
button, input, select { font: inherit; color: inherit; }
button { padding: 0; border: 0; background: none; white-space: nowrap; }
input, select { min-width: 0; padding: 0; border: 0; outline: 0; background: none; appearance: none; }
svg { display: block; flex: none; }
h1, h2, h3, ul, hr { margin: 0; padding: 0; font-size: 17px; font-weight: 400; list-style: none; }

.tri { width: 0; height: 0; flex: none; border: 6px solid transparent; }
.tri.down { border-top-color: #555; border-bottom: 0; }
.tri.up { border-bottom-color: #555; border-top: 0; }
.tri.right { border-left-color: #555; border-right: 0; }
.tri.left { border-right-color: #555; border-left: 0; }
.tri.pale { border-top-color: #999; margin-left: -4px; }

.titlebar { display: flex; align-items: center; height: 34px; background: #fff; }
.logo { width: 24px; height: 24px; margin: 0 6px 0 2px; }
.titlebar h1 { flex: 1; }
.win { width: 70px; height: 34px; }
.win svg { width: 22px; height: 22px; margin: 0 auto; }

.menubar { display: flex; gap: 6px; height: 30px; padding-left: 8px; border-bottom: 1px solid #d6d6d6; font-size: 17px; }
.menu { position: relative; }
.menu > button { height: 30px; padding: 0 5px; }
.menu u { text-underline-offset: 3px; }
.menu.open > button { background: #0078d7; color: #fff; }
.popup {
  position: absolute;
  z-index: 5;
  top: 30px;
  left: 0;
  width: 277px;
  border: 1px solid #999;
  background: #fff;
  box-shadow: 3px 3px 3px rgba(0, 0, 0, 0.4);
}
.popup li { position: relative; }
.popup button { display: flex; align-items: center; width: 100%; height: 33px; padding: 0 6px; text-align: left; }
.popup span { flex: 1; }
.mi { width: 24px; height: 24px; margin-right: 6px; }
.popup .active > button { background: #0078d7; color: #fff; }
.popup .sub { top: -1px; left: 275px; width: 346px; color: #000; }

.toolbar { display: flex; align-items: center; height: 43px; border-bottom: 1px solid #b4b4b4; background: linear-gradient(#fafafa, #eee); }
.tool { width: 33px; height: 31px; }
.tool svg { width: 24px; height: 24px; margin: 0 auto; }
.tool.on { border: 1px solid #aaa; border-radius: 3px; background: #dcdcdc; }
.tool.off svg { opacity: 0.35; filter: grayscale(0.7); }
.drop { display: flex; justify-content: center; width: 18px; }
.drop.off { opacity: 0.6; }
.handle { width: 24px; height: 18px; background: radial-gradient(circle, #aaa 1px, transparent 1px) 14px 0 / 3px 3px repeat; clip-path: inset(0 4px 0 14px); }
.handle.first { width: 18px; clip-path: inset(0 4px 0 8px); }
.sep { width: 10px; height: 20px; background: linear-gradient(#ccc, #ccc) center / 1px 100% no-repeat; }
.rest { width: 255px; }

.work { display: flex; flex: 1; }
.dock { display: flex; flex-direction: column; width: 463px; }
.dock-title { display: flex; align-items: center; gap: 3px; height: 24px; padding: 0 2px 0 4px; }
.dock-title h2 { flex: 1; font-size: 16px; }
.dock-title svg { width: 12px; height: 12px; fill: none; stroke: #555; }
.dock-tools { display: flex; align-items: center; gap: 9px; height: 32px; padding: 0 0 5px 10px; }
.dock-tools svg { width: 16px; height: 16px; }
.tree { flex: 1; border: 1px solid #b0b0b0; background: #fff; font-size: 17px; }
.node { display: flex; align-items: center; gap: 7px; height: 27px; padding-left: 63px; }
.node.top { gap: 10px; padding-left: 9px; background: linear-gradient(#e0e0e0, #e0e0e0) right / 7px 23px no-repeat #efefef; }
.node.top .check { margin-left: 2px; }
.node strong { margin-left: -3px; text-decoration: underline; text-underline-offset: 3px; }
.swatch { width: 20px; height: 20px; }
.black { background: #000; }
.check { position: relative; flex: none; width: 20px; height: 20px; margin: 0; border: 1px solid #b0b0b0; background: #fff; }
.check:checked::after { content: ''; position: absolute; left: 6px; top: 1px; width: 5px; height: 11px; border: solid #000; border-width: 0 3px 3px 0; transform: rotate(35deg); }
.dock-tabs { display: flex; align-items: flex-start; height: 36px; margin-top: 2px; border-top: 1px solid #b0b0b0; }
.dock-tabs button { height: 31px; padding: 0 16px; border: 1px solid #bbb; border-top: 0; border-radius: 0 0 3px 3px; background: #dcdcdc; }
.dock-tabs .cur { height: 33px; background: #f8f8f8; }
.splitter { width: 9px; background: radial-gradient(circle, #bbb 1px, transparent 1px) center / 4px 4px no-repeat; }
.canvas { display: flex; flex: 1; align-items: center; justify-content: center; border: 1px solid #b0b0b0; background: #fff; }
.dem { width: 850px; height: 850px; overflow: hidden; background: #444; }
.relief { mix-blend-mode: soft-light; }

.status { display: flex; align-items: center; height: 35px; padding: 0 7px 0 4px; }
.locate { display: flex; align-items: center; width: 293px; height: 27px; border: 1px solid #aaa; border-radius: 3px; background: #fff; }
.locate svg { width: 15px; height: 15px; margin: 0 5px 0 7px; }
.locate input { flex: 1; }
.locate input::placeholder { color: #808080; opacity: 1; }
.ready { flex: 1; padding-left: 8px; }
.box, .spin, .combo { height: 27px; border: 1px solid #aaa; border-radius: 3px; background: #fff; }
.coord { width: 136px; margin-left: 3px; padding-left: 6px; }
.coord, .scale, .spin, .crs { font-size: 16px; }
.track { width: 23px; height: 25px; margin: 0 15px 0 3px; }
.combo { position: relative; display: flex; align-items: center; background: linear-gradient(#fdfdfd, #ededed); }
.combo select { flex: 1; height: 100%; padding-left: 4px; }
.combo .tri { position: absolute; right: 10px; pointer-events: none; }
.combo.scale { width: 114px; margin-left: 3px; background: linear-gradient(90deg, #fff 82px, #f2f2f2 82px); }
.lock { width: 20px; height: 24px; margin: 0 9px 0 13px; }
.spin { display: flex; width: 104px; margin-left: 3px; }
.spin input { flex: 1; padding-left: 5px; }
.spin > span { display: flex; flex-direction: column; align-items: center; justify-content: center; gap: 5px; width: 21px; border-left: 1px solid #aaa; background: #f5f5f5; }
.rot { padding-left: 9px; }
.rot + .spin { width: 101px; margin: 0 7px 0 9px; }
.render { padding: 0 16px 0 9px; }
.crs { display: flex; align-items: center; gap: 4px; }
.crs svg { width: 24px; height: 22px; }
.msg { margin-left: 22px; }
.msg svg { width: 25px; height: 24px; }
.taskedge { height: 2px; background: linear-gradient(90deg, #3a3a3a 72px, #b8b8b8 72px, #b8b8b8 588px, #444 588px); }

.dialog {
  position: absolute;
  z-index: 6;
  top: 42px;
  left: 1175px;
  width: 474px;
  border: 1px solid #6c6c6c;
  background: #efefef;
  box-shadow: 0 0 2px 1px rgba(120, 120, 120, 0.6);
}
.dialog > header { display: flex; align-items: center; height: 44px; padding: 0 14px 0 9px; background: #fff; }
.dialog > header h2 { flex: 1; }
.dialog > header svg { width: 24px; height: 24px; }
.dialog > header button svg { width: 22px; height: 22px; }
.tabs { display: flex; align-items: flex-end; height: 50px; padding-left: 16px; }
.tabs button { height: 33px; padding: 2px 16px 0; border: 1px solid #b0b0b0; border-bottom: 0; border-left: 0; border-radius: 0 3px 0 0; background: #eaeaea; }
.tabs .cur { z-index: 1; height: 36px; margin-bottom: -1px; padding-top: 0; border-left: 1px solid #b0b0b0; border-radius: 3px 3px 0 0; background: #fbfbfb; }
.pane { display: grid; grid-template: 367px 21px / 1fr 21px; margin: 0 16px; padding-left: 2px; border: 1px solid #b0b0b0; }
.view { overflow: hidden; min-width: 0; }
.form { display: flex; flex-direction: column; width: 450px; padding: 1px 0 0 3px; }
.form label { height: 27px; line-height: 27px; white-space: nowrap; }
.line { display: flex; gap: 7px; }
.line.first { height: 42px; padding-top: 5px; }
.layer { width: 384px; height: 32px; font-size: 16px; }
.layer svg { width: 20px; height: 20px; margin-left: 8px; }
.side { width: 38px; height: 26px; padding-left: 8px; border: 1px solid #aaa; border-radius: 3px; background: #f8f8f8; text-align: left; }
.field { position: relative; width: 394px; height: 27px; border: 1px solid #3aa0f0; border-radius: 3px; background: #fff; font-size: 16px; }
.field::after { content: ''; position: absolute; top: 4px; left: 299px; width: 1px; height: 18px; background: #000; }
.field input { width: 100%; height: 25px; padding-left: 2px; }
.line.ext { height: 37px; padding-top: 4px; }
.nodata { flex: none; width: 411px; height: 28px; margin: 6px 0 7px; padding-left: 4px; border: 1px solid #aaa; background: #fff; }
.form h3 { display: flex; align-items: center; gap: 10px; height: 28px; padding-left: 2px; font-size: 16px; font-weight: 700; }
.adv { display: flex; flex-direction: column; padding: 11px 0 0 15px; border: 1px solid #d6d6d6; background: #ececec; }
.profile { height: 41px; gap: 9px; padding-top: 5px; }
.profile .combo { width: 350px; }
.profile .combo .tri { left: 320px; right: auto; }
.adv hr { height: 2px; margin-bottom: 11px; border: solid #aaa; border-width: 1px 0 0; }
table { width: 434px; border-collapse: collapse; table-layout: fixed; }
th { height: 31px; border: 1px solid #bbb; background: linear-gradient(#fdfdfd, #ededed); font-size: 16px; font-weight: 400; }
.name { width: 282px; }
td { height: 24px; border: 1px solid #bbb; border-right: 0; background: #fff; }
.vbar, .hbar { display: flex; border: 0 solid #b0b0b0; }
.vbar { flex-direction: column; border-left-width: 1px; }
.hbar { border-top-width: 1px; margin-left: -1px; }
.vbar b, .hbar b { display: flex; flex: none; align-items: center; justify-content: center; width: 20px; height: 20px; background: #fbfbfb; }
.vbar s { height: 140px; border: solid #bbb; border-width: 1px 0; background: #f8f8f8; }
.vbar em { flex: 1; background: #e6e6e6; }
.hbar s { flex: 1; border: solid #bbb; border-width: 0 1px; background: #f8f8f8; }
.hbar em { width: 20px; background: #e6e6e6; border-right: 1px solid #bbb; }
.corner { border: solid #b0b0b0; border-width: 1px 0 0 1px; }
.actions { display: flex; justify-content: space-between; align-items: flex-start; margin: 39px 16px 0; }
.actions.last { margin: 8px 16px 17px; }
.actions button { width: 80px; height: 30px; border: 1px solid #aaa; border-radius: 3px; background: linear-gradient(#fdfdfd, #efefef); }
.actions button:disabled { color: #8a8a8a; border-color: #c4c4c4; }
.actions .batch { width: 173px; }
.actions .run { border-color: #46a5f0; background: linear-gradient(#fafcfe, #e2e9f1); }
.progress { width: 351px; height: 27px; border: 1px solid #aaa; border-radius: 3px; background: #fff; text-align: center; line-height: 26px; }

.ring, .step { position: absolute; z-index: 8; pointer-events: none; }
.ring { border: 5px solid #ed1c24; border-radius: 50%; }
.step { color: #ed1c24; font-size: 64px; font-weight: 500; line-height: 64px; }
.r1 { left: 417px; top: 57px; width: 52px; height: 53px; }
.r2 { left: 722px; top: 214px; width: 259px; height: 62px; }
.r3 { left: 1146px; top: 196px; width: 428px; height: 94px; }
.r4 { left: 1362px; top: 590px; width: 110px; height: 58px; }
.s1 { left: 675px; top: 154px; }
.s2 { left: 1594px; top: 200px; }
.s3 { left: 1451px; top: 530px; }
.s4 { left: 386px; top: 102px; }
</style>
